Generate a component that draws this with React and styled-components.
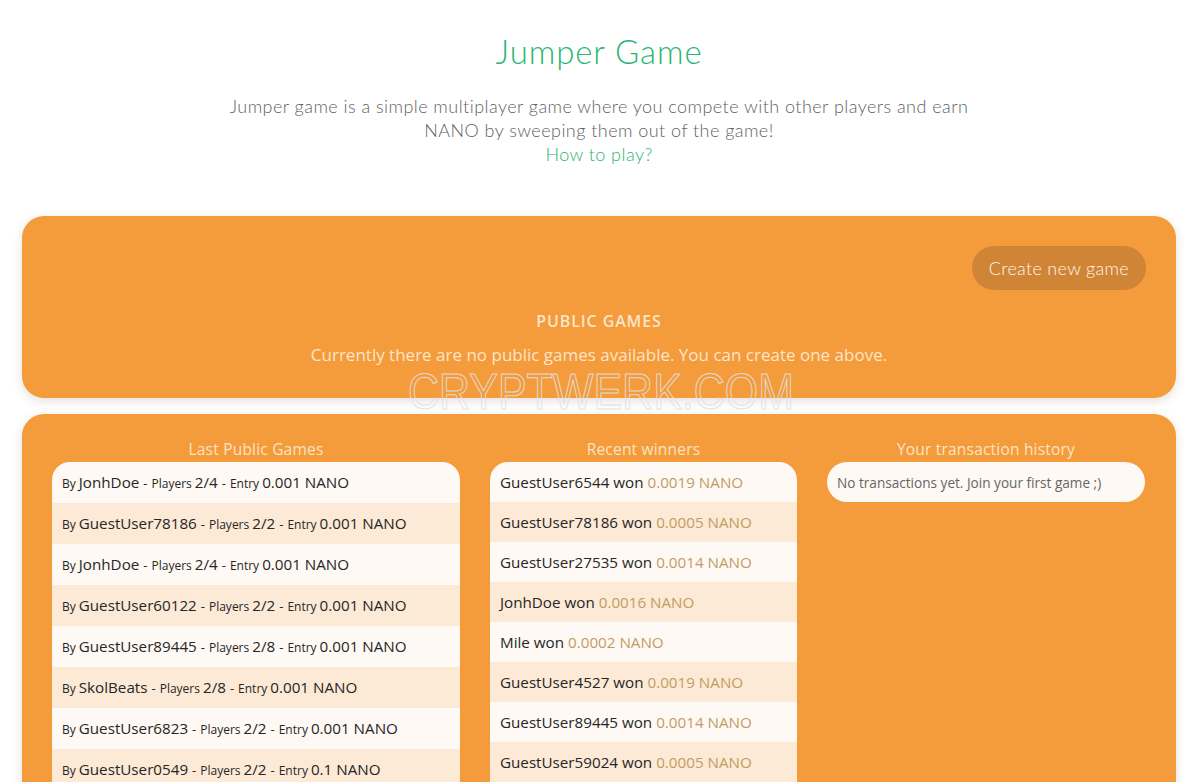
import React from "react";
import styled, { createGlobalStyle } from "styled-components";

const GlobalStyle = createGlobalStyle`
  html, body {
    margin: 0;
    padding: 0;
    background: #ffffff;
  }
  body {
    font-family: "Open Sans", "Liberation Sans", sans-serif;
    color: #333;
  }
  * { box-sizing: border-box; }
`;

const Page = styled.div`
  position: relative;
  padding: 0 25px 40px 22px;
`;

const Intro = styled.header`
  display: flex;
  flex-direction: column;
  align-items: center;
  padding-top: 30px;
  padding-bottom: 50px;
  text-align: center;
  font-family: Lato, "Open Sans", sans-serif;
  font-weight: 300;
`;

const Title = styled.h1`
  margin: 0;
  font-size: 33px;
  line-height: 42px;
  font-weight: 300;
  color: #2bb673;
  letter-spacing: 0.9px;
`;

const Lead = styled.p`
  margin: 22px 0 0;
  max-width: 770px;
  font-size: 18px;
  line-height: 24px;
  letter-spacing: 0.45px;
  color: #626262;
`;

const HelpLink = styled.a`
  font-size: 18px;
  line-height: 24px;
  letter-spacing: 0.45px;
  color: #2bb673;
  text-decoration: none;
  cursor: pointer;
`;

const Card = styled.section`
  background: #f49b3c;
  border-radius: 22px;
  box-shadow: 0 3px 10px rgba(120, 80, 40, 0.18);
  padding: ${(p) => p.$pad};
  & + & {
    margin-top: 16px;
  }
`;

const Toolbar = styled.div`
  display: flex;
  justify-content: flex-end;
`;

const CreateButton = styled.button`
  height: 44px;
  padding: 0 17px;
  border: none;
  border-radius: 22px;
  background: #cf8436;
  color: #fff6ec;
  font-family: Lato, "Open Sans", sans-serif;
  font-weight: 300;
  font-size: 18px;
  letter-spacing: 0.3px;
  cursor: pointer;
`;

const SectionTitle = styled.h2`
  margin: 21px 0 0;
  text-align: center;
  font-size: 16px;
  line-height: 20px;
  font-weight: 600;
  color: #fde5c8;
  letter-spacing: 0.9px;
`;

const EmptyNote = styled.p`
  margin: 14px 0 0;
  text-align: center;
  font-size: 17px;
  line-height: 20px;
  font-weight: 400;
  color: #fde5c8;
`;

const Columns = styled.div`
  display: grid;
  grid-template-columns: 408px 307px 318px;
  column-gap: 30px;
  align-items: start;
`;

const Column = styled.div`
  display: flex;
  flex-direction: column;
`;

const ColumnTitle = styled.h3`
  margin: 0 0 3px;
  text-align: center;
  font-size: 15.5px;
  line-height: 20px;
  font-weight: 400;
  letter-spacing: 0.2px;
  color: #fde3c4;
`;

const List = styled.ul`
  list-style: none;
  margin: 0;
  padding: 0;
  border-radius: 18px 18px 0 0;
  overflow: hidden;
`;

const Row = styled.li`
  display: block;
  height: ${(p) => p.$h}px;
  line-height: ${(p) => p.$h}px;
  padding: 0 10px;
  background: ${(p) => (p.$odd ? "#fce9d6" : "#fef9f4")};
  color: #262626;
  font-size: 15.2px;
  white-space: nowrap;
`;

const Small = styled.span`
  font-size: 12px;
  margin-right: 3px;
`;

const Dash = styled.span`
  margin: 0 4px;
  font-size: 13px;
`;

const Amount = styled.span`
  color: #c49c62;
  margin-left: 4px;
`;

const Notice = styled.div`
  display: flex;
  align-items: center;
  height: 40px;
  padding: 0 10px;
  border-radius: 20px;
  background: #fef9f4;
  color: #666;
  font-size: 13.6px;
`;

const Watermark = styled.div`
  position: absolute;
  top: 364px;
  left: 50%;
  transform: translateX(-50%) scaleX(0.86);
  font-family: "Liberation Sans", Arial, sans-serif;
  font-size: 50px;
  line-height: 56px;
  color: transparent;
  -webkit-text-stroke: 1.1px rgba(225, 225, 225, 0.9);
  pointer-events: none;
  white-space: nowrap;
`;

const games = [
  ["JonhDoe", "2/4", "0.001"],
  ["GuestUser78186", "2/2", "0.001"],
  ["JonhDoe", "2/4", "0.001"],
  ["GuestUser60122", "2/2", "0.001"],
  ["GuestUser89445", "2/8", "0.001"],
  ["SkolBeats", "2/8", "0.001"],
  ["GuestUser6823", "2/2", "0.001"],
  ["GuestUser0549", "2/2", "0.1"],
];

const winners = [
  ["GuestUser6544", "0.0019"],
  ["GuestUser78186", "0.0005"],
  ["GuestUser27535", "0.0014"],
  ["JonhDoe", "0.0016"],
  ["Mile", "0.0002"],
  ["GuestUser4527", "0.0019"],
  ["GuestUser89445", "0.0014"],
  ["GuestUser59024", "0.0005"],
];

export default function App() {
  return (
    <>
      <GlobalStyle />
      <Page>
        <Intro>
          <Title>Jumper Game</Title>
          <Lead>
            Jumper game is a simple multiplayer game where you compete with other players and earn
            NANO by sweeping them out of the game!
          </Lead>
          <HelpLink>How to play?</HelpLink>
        </Intro>

        <Card $pad="30px 30px 33px">
          <Toolbar>
            <CreateButton>Create new game</CreateButton>
          </Toolbar>
          <SectionTitle>PUBLIC GAMES</SectionTitle>
          <EmptyNote>Currently there are no public games available. You can create one above.</EmptyNote>
        </Card>

        <Card $pad="25px 30px 30px">
          <Columns>
            <Column>
              <ColumnTitle>Last Public Games</ColumnTitle>
              <List>
                {games.map(([user, players, entry], i) => (
                  <Row key={i} $h={41} $odd={i % 2 === 1}>
                    <Small>By</Small>
                    {user}
                    <Dash>-</Dash>
                    <Small>Players</Small>
                    {players}
                    <Dash>-</Dash>
                    <Small>Entry</Small>
                    {entry} NANO
                  </Row>
                ))}
              </List>
            </Column>
            <Column>
              <ColumnTitle>Recent winners</ColumnTitle>
              <List>
                {winners.map(([user, amount], i) => (
                  <Row key={i} $h={40} $odd={i % 2 === 1}>
                    {user} won
                    <Amount>{amount} NANO</Amount>
                  </Row>
                ))}
              </List>
            </Column>
            <Column>
              <ColumnTitle>Your transaction history</ColumnTitle>
              <Notice>No transactions yet. Join your first game ;)</Notice>
            </Column>
          </Columns>
        </Card>

        <Watermark>CRYPTWERK.COM</Watermark>
      </Page>
    </>
  );
}
